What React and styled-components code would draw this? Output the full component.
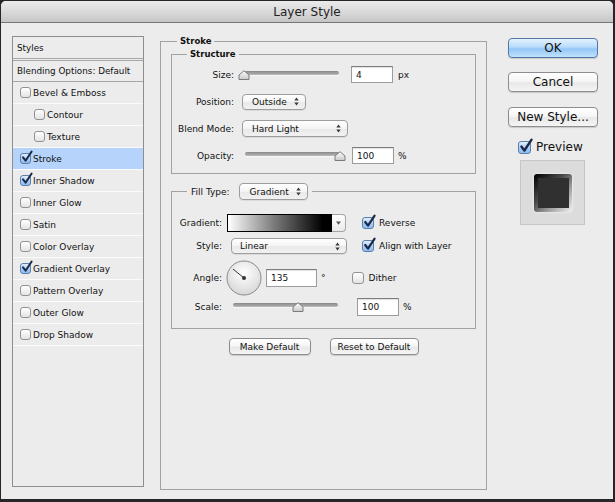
import React from "react";
import styled, { createGlobalStyle } from "styled-components";

const GlobalStyle = createGlobalStyle`
  html, body {
    margin: 0;
    padding: 0;
    background: #1f1f1f;
  }
  body {
    font-family: "DejaVu Sans", "Lucida Grande", sans-serif;
    color: #111;
  }
`;

const Screen = styled.div`
  width: 615px;
  height: 502px;
  box-sizing: border-box;
  padding: 1px 2px 3px 1px;
  background: #262626;
`;

const Window = styled.div`
  height: 100%;
  display: flex;
  flex-direction: column;
  background: #ececec;
  border-radius: 5px 5px 0 0;
  overflow: hidden;
`;

const TitleBar = styled.div`
  height: 21px;
  flex: none;
  display: flex;
  align-items: center;
  justify-content: center;
  border-bottom: 1px solid #767676;
  background: linear-gradient(#ebebeb, #d6d6d6 60%, #c5c5c5);
  font-size: 12px;
  color: #222;
`;

const Body = styled.div`
  flex: 1;
  display: flex;
  align-items: flex-start;
  padding: 13px 0 0 11px;
`;

/* ---------- left list ---------- */

const ListPanel = styled.div`
  width: 132px;
  height: 451px;
  flex: none;
  box-sizing: border-box;
  border: 1px solid #8e8e8e;
  background: #ececec;
`;

const ListHeader = styled.div`
  height: ${(p) => p.$h}px;
  display: flex;
  align-items: center;
  padding-left: 4px;
  font-size: 8.8px;
  border-bottom: ${(p) => p.$border};
`;

const ListItem = styled.div`
  height: 21px;
  display: flex;
  align-items: center;
  gap: 2px;
  padding-left: ${(p) => (p.$indent ? 21 : 7)}px;
  border-bottom: 1px solid #fbfbfb;
  background: ${(p) => (p.$selected ? "#b6d4fb" : "transparent")};
  font-size: 9px;
`;

/* ---------- controls ---------- */

const Box = styled.span`
  position: relative;
  display: inline-block;
  flex: none;
  width: ${(p) => p.$size}px;
  height: ${(p) => p.$size}px;
  box-sizing: border-box;
  border: 1px solid ${(p) => (p.$on ? "#5c7eab" : "#929292")};
  border-radius: 3px;
  background: ${(p) =>
    p.$on
      ? "linear-gradient(#e2effd, #a9cdf5 55%, #8dbdf1)"
      : "linear-gradient(#ffffff, #e4e4e4)"};
  margin-left: ${(p) => p.$ml || 0}px;
`;

const Tick = styled.svg`
  position: absolute;
  left: 0;
  top: -3px;
  overflow: visible;
`;

const Check = ({ on, size = 11, ml }) => (
  <Box $on={on} $size={size} $ml={ml}>
    {on && (
      <Tick width={size} height={size} viewBox="0 0 12 12">
        <path
          d="M2.2 7 L5 10.6 L11.6 0.6"
          fill="none"
          stroke="#1b2947"
          strokeWidth="2.2"
          strokeLinecap="round"
          strokeLinejoin="round"
        />
      </Tick>
    )}
  </Box>
);

const SliderWrap = styled.div`
  position: relative;
  flex: none;
  width: ${(p) => p.$w}px;
  height: 12px;
  margin-left: ${(p) => p.$ml || 0}px;
`;

const Track = styled.div`
  position: absolute;
  left: 0;
  right: 0;
  top: 2px;
  height: 4px;
  border-radius: 3px;
  background: linear-gradient(#878787, #b9b9b9);
  box-shadow: 0 1px 0 #f8f8f8;
`;

const Thumb = styled.svg`
  position: absolute;
  top: 1px;
`;

const Slider = ({ w, value, ml }) => (
  <SliderWrap $w={w} $ml={ml}>
    <Track />
    <Thumb
      width="12"
      height="10"
      viewBox="0 0 12 10"
      style={{ left: Math.round((w * value) / 100) - 6 }}
    >
      <defs>
        <linearGradient id="thumbFill" x1="0" y1="0" x2="0" y2="1">
          <stop offset="0" stopColor="#ffffff" />
          <stop offset="1" stopColor="#c9c9c9" />
        </linearGradient>
      </defs>
      <path
        d="M1 9.5 L1 5 L6 0.7 L11 5 L11 9.5 Z"
        fill="url(#thumbFill)"
        stroke="#7b7b7b"
        strokeWidth="1"
        strokeLinejoin="round"
      />
    </Thumb>
  </SliderWrap>
);

const Field = styled.input`
  flex: none;
  width: ${(p) => p.$w}px;
  height: ${(p) => p.$h || 17}px;
  box-sizing: border-box;
  margin: 0 0 0 ${(p) => p.$ml || 0}px;
  padding: 0 0 0 4px;
  border: 1px solid #9c9c9c;
  border-top-color: #7d7d7d;
  background: #fff;
  box-shadow: inset 0 1px 1px rgba(0, 0, 0, 0.12);
  font-family: inherit;
  font-size: 9px;
  color: #111;
  outline: none;
`;

const Unit = styled.span`
  margin-left: ${(p) => p.$ml}px;
  font-size: 9px;
`;

const SelectBox = styled.div`
  flex: none;
  display: flex;
  align-items: center;
  justify-content: space-between;
  width: ${(p) => p.$w}px;
  height: ${(p) => p.$h || 17}px;
  box-sizing: border-box;
  margin-left: ${(p) => p.$ml || 0}px;
  padding: 0 6px 0 ${(p) => p.$pl || 9}px;
  border: 1px solid #9d9d9d;
  border-radius: 4px;
  background: linear-gradient(#ffffff, #f4f4f4 50%, #e9e9e9 51%, #f1f1f1);
  box-shadow: 0 1px 0 rgba(0, 0, 0, 0.07);
  font-size: 9px;
`;

const Arrows = () => (
  <svg width="5" height="9" viewBox="0 0 5 9">
    <path d="M0.3 3.5 L2.5 0.6 L4.7 3.5 Z M0.3 5.5 L2.5 8.4 L4.7 5.5 Z" fill="#3a3a3a" />
  </svg>
);

const Select = ({ children, ...rest }) => (
  <SelectBox {...rest}>
    <span>{children}</span>
    <Arrows />
  </SelectBox>
);

/* ---------- groups ---------- */

const Group = styled.fieldset`
  margin: ${(p) => p.$mt || 0}px 0 0 ${(p) => p.$ml || 0}px;
  padding: ${(p) => p.$pad};
  min-width: 0;
  box-sizing: border-box;
  width: ${(p) => (p.$w ? `${p.$w}px` : "auto")};
  height: ${(p) => (p.$h ? `${p.$h}px` : "auto")};
  flex: none;
  border: 1px solid #a2a2a2;
`;

const Legend = styled.legend`
  margin-left: ${(p) => p.$ml}px;
  padding: 0 3px;
  font-size: 8.5px;
  font-weight: bold;
  line-height: 12px;
`;

const FillLegend = styled.legend`
  display: flex;
  align-items: center;
  margin-left: 15px;
  padding: 0 4px;
  font-size: 9px;
`;

const Row = styled.div`
  display: flex;
  align-items: center;
  height: ${(p) => p.$h}px;
`;

const Label = styled.span`
  flex: none;
  width: ${(p) => p.$w}px;
  text-align: right;
  font-size: 9px;
`;

const CheckText = styled.span`
  margin-left: 5px;
  font-size: 9px;
`;

const GradientPick = styled.div`
  flex: none;
  display: flex;
  width: 119px;
  height: 18px;
  margin-left: 5px;
`;

const GradientBar = styled.div`
  flex: 1;
  border: 1px solid #000;
  background: linear-gradient(90deg, #ffffff 0%, #7a7a7a 45%, #000000 92%);
`;

const GradientDrop = styled.div`
  width: 13px;
  display: flex;
  align-items: center;
  justify-content: center;
  border: 1px solid #a5a5a5;
  border-left: none;
  border-radius: 0 4px 4px 0;
  background: linear-gradient(#ffffff, #e9e9e9);
`;

const DialSvg = styled.svg`
  flex: none;
  margin-left: 4px;
`;

const Dial = () => (
  <DialSvg width="36" height="36" viewBox="0 0 36 36">
    <defs>
      <radialGradient id="dialFill" cx="0.5" cy="0.35" r="0.7">
        <stop offset="0" stopColor="#ffffff" />
        <stop offset="1" stopColor="#d4d4d4" />
      </radialGradient>
    </defs>
    <circle cx="18" cy="18" r="17" fill="url(#dialFill)" stroke="#8a8a8a" />
    <line x1="18" y1="18" x2="7" y2="9" stroke="#333" strokeWidth="1" />
    <circle cx="18" cy="18" r="2" fill="#333" />
  </DialSvg>
);

const FooterRow = styled.div`
  display: flex;
  justify-content: center;
  gap: 19px;
  margin-top: 9px;
`;

const PushButton = styled.button`
  flex: none;
  width: ${(p) => p.$w}px;
  height: ${(p) => p.$h}px;
  margin-top: ${(p) => p.$mt || 0}px;
  padding: 0;
  border: 1px solid ${(p) => (p.$primary ? "#5477a6" : "#8d8d8d")};
  border-radius: 4px;
  background: ${(p) =>
    p.$primary
      ? "linear-gradient(#e4f2fe, #b7dbfa 45%, #93c7f5 55%, #c0e2fd)"
      : "linear-gradient(#ffffff, #f6f6f6 45%, #e8e8e8 55%, #f5f5f5)"};
  box-shadow: 0 1px 1px rgba(0, 0, 0, 0.15);
  font-family: inherit;
  font-size: ${(p) => p.$fs}px;
  color: #111;
`;

/* ---------- right column ---------- */

const SideColumn = styled.div`
  display: flex;
  flex-direction: column;
  width: 90px;
  margin: 2px 0 0 21px;
`;

const PreviewRow = styled.div`
  display: flex;
  align-items: center;
  gap: 5px;
  height: 16px;
  margin-top: 12px;
  padding-left: 10px;
  font-size: 12px;
`;

const PreviewBox = styled.div`
  width: 65px;
  height: 65px;
  box-sizing: border-box;
  margin: 5px 0 0 12px;
  display: flex;
  align-items: center;
  justify-content: center;
  border: 1px solid #c6c6c6;
  background: #dcdcdc;
`;

const PreviewTile = styled.div`
  width: 38px;
  height: 38px;
  box-sizing: border-box;
  padding: 4px 3px 4px 4px;
  border-radius: 3px;
  background: linear-gradient(135deg, #000000, #4a4a4a 40%, #9a9a9a 65%, #f2f2f2);
  box-shadow: 0 0 3px rgba(255, 255, 255, 0.8);
`;

const PreviewFace = styled.div`
  width: 100%;
  height: 100%;
  background: #303030;
`;

const layers = [
  { name: "Bevel & Emboss" },
  { name: "Contour", indent: true },
  { name: "Texture", indent: true },
  { name: "Stroke", on: true, selected: true },
  { name: "Inner Shadow", on: true },
  { name: "Inner Glow" },
  { name: "Satin" },
  { name: "Color Overlay" },
  { name: "Gradient Overlay", on: true },
  { name: "Pattern Overlay" },
  { name: "Outer Glow" },
  { name: "Drop Shadow" },
];

export default function App() {
  return (
    <Screen>
      <GlobalStyle />
      <Window>
        <TitleBar>Layer Style</TitleBar>
        <Body>
          <ListPanel>
            <ListHeader $h={21} $border="3px double #a6a6a6">
              Styles
            </ListHeader>
            <ListHeader $h={20} $border="1px solid #a6a6a6">
              Blending Options: Default
            </ListHeader>
            {layers.map((l) => (
              <ListItem key={l.name} $indent={l.indent} $selected={l.selected}>
                <Check on={l.on} size={11} />
                <span>{l.name}</span>
              </ListItem>
            ))}
          </ListPanel>

          <Group $pad="1px 10px 0" $w={327} $h={455} $mt={-1} $ml={16}>
            <Legend $ml={6}>Stroke</Legend>

            <Group $pad="1px 0 4px">
              <Legend $ml={15}>Structure</Legend>
              <Row $h={27}>
                <Label $w={62}>Size:</Label>
                <Slider w={95} value={0} ml={10} />
                <Field $w={42} $ml={12} defaultValue="4" readOnly />
                <Unit $ml={5}>px</Unit>
              </Row>
              <Row $h={27}>
                <Label $w={62}>Position:</Label>
                <Select $w={64} $h={16} $ml={8}>Outside</Select>
              </Row>
              <Row $h={27}>
                <Label $w={62}>Blend Mode:</Label>
                <Select $w={106} $ml={8}>Hard Light</Select>
              </Row>
              <Row $h={27}>
                <Label $w={62}>Opacity:</Label>
                <Slider w={95} value={100} ml={11} />
                <Field $w={42} $ml={12} defaultValue="100" readOnly />
                <Unit $ml={4}>%</Unit>
              </Row>
            </Group>

            <Group $pad="11px 0 12px" $mt={9}>
              <FillLegend>
                Fill Type:
                <Select $w={69} $ml={9} $pl={10}>Gradient</Select>
              </FillLegend>
              <Row $h={23}>
                <Label $w={50}>Gradient:</Label>
                <GradientPick>
                  <GradientBar />
                  <GradientDrop>
                    <svg width="5" height="4" viewBox="0 0 5 4">
                      <path d="M0 0.5 L5 0.5 L2.5 3.8 Z" fill="#555" />
                    </svg>
                  </GradientDrop>
                </GradientPick>
                <Check on size={12} ml={16} />
                <CheckText>Reverse</CheckText>
              </Row>
              <Row $h={24}>
                <Label $w={50}>Style:</Label>
                <Select $w={116} $h={16} $ml={9} $pl={8}>Linear</Select>
                <Check on size={12} ml={15} />
                <CheckText>Align with Layer</CheckText>
              </Row>
              <Row $h={40}>
                <Label $w={50}>Angle:</Label>
                <Dial />
                <Field $w={51} $h={18} $ml={4} defaultValue="135" readOnly />
                <Unit $ml={4}>°</Unit>
                <Check size={12} ml={26} />
                <CheckText>Dither</CheckText>
              </Row>
              <Row $h={18}>
                <Label $w={50}>Scale:</Label>
                <Slider w={105} value={62} ml={11} />
                <Field $w={42} $h={18} $ml={19} defaultValue="100" readOnly />
                <Unit $ml={4}>%</Unit>
              </Row>
            </Group>

            <FooterRow>
              <PushButton $w={82} $h={17} $fs={9}>Make Default</PushButton>
              <PushButton $w={89} $h={17} $fs={9}>Reset to Default</PushButton>
            </FooterRow>
          </Group>

          <SideColumn>
            <PushButton $primary $w={90} $h={20} $fs={12}>OK</PushButton>
            <PushButton $w={90} $h={20} $fs={12} $mt={14}>
              Cancel
            </PushButton>
            <PushButton $w={90} $h={20} $fs={12} $mt={15}>
              New Style...
            </PushButton>
            <PreviewRow>
              <Check on size={13} />
              <span>Preview</span>
            </PreviewRow>
            <PreviewBox>
              <PreviewTile>
                <PreviewFace />
              </PreviewTile>
            </PreviewBox>
          </SideColumn>
        </Body>
      </Window>
    </Screen>
  );
}
